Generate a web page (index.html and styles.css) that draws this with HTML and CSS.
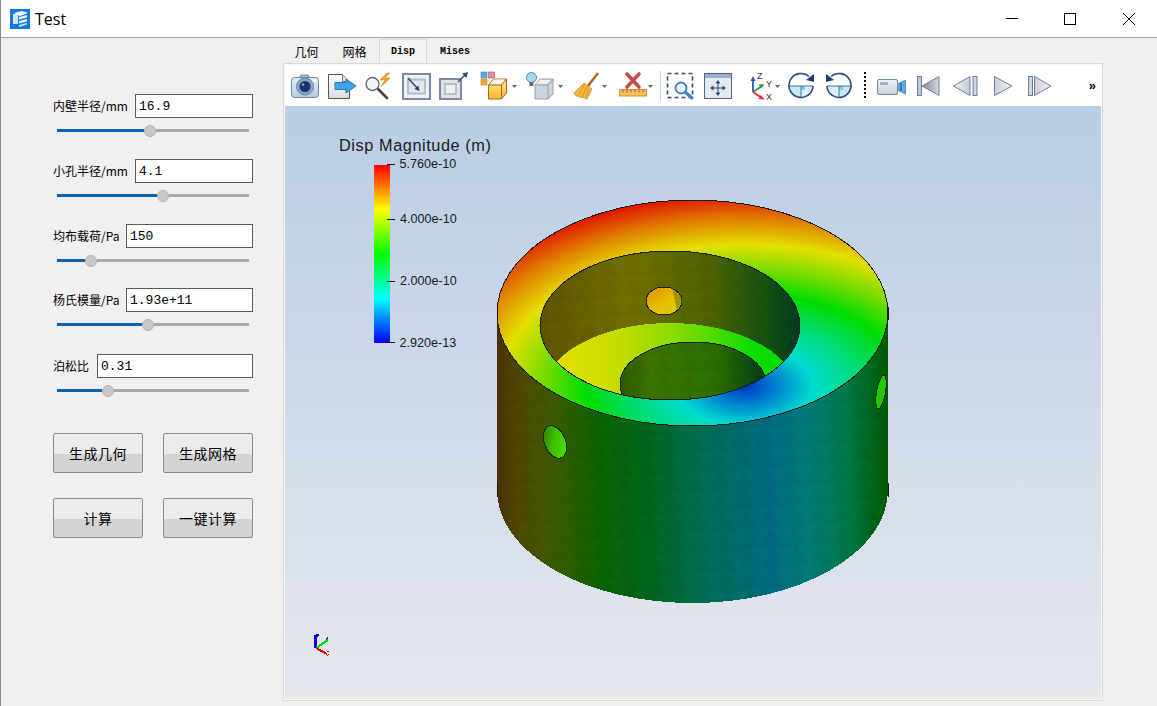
FILE: index.html
```html
<!DOCTYPE html>
<html lang="zh">
<head>
<meta charset="utf-8">
<title>Test</title>
<link rel="stylesheet" href="styles.css">
</head>
<body>
<div class="window">
  <header class="titlebar">
    <svg class="logo" viewBox="0 0 20 20">
      <rect width="20" height="20" fill="#1677e0"/>
      <path d="M3 5h5v10H3z" fill="#cfe4fb"/>
      <path d="M4 4l8-2 6 2-8 3z" fill="#fff"/>
      <path d="M9 8l8-2v2.5l-8 2z" fill="#e6f1fd"/>
      <path d="M9 12l8-2v2.5l-8 2z" fill="#e6f1fd"/>
      <path d="M9 16l8-2v1.500l-8 2.500z" fill="#cfe4fb"/>
    </svg>
    <span class="title">Test</span>
    <div class="caption">
      <svg class="cap" viewBox="0 0 12 12"><path d="M0 5.500h12" stroke="#000" fill="none"/></svg>
      <svg class="cap" viewBox="0 0 12 12"><rect x=".5" y=".5" width="11" height="11" stroke="#000" fill="none"/></svg>
      <svg class="cap cap-close" viewBox="0 0 12 12"><path d="M0 0l12 12M12 0L0 12" stroke="#000" fill="none"/></svg>
    </div>
  </header>
  <div class="main">
    <aside class="sidebar">
      <div class="param">
        <div class="row"><label class="lbl">内壁半径/mm</label><input class="field field-m" value="16.9"></div>
        <div class="slider"><span class="fill" style="width:87px"></span><span class="thumb"></span><span class="rest"></span></div>
      </div>
      <div class="param">
        <div class="row"><label class="lbl">小孔半径/mm</label><input class="field field-m" value="4.1"></div>
        <div class="slider"><span class="fill" style="width:100px"></span><span class="thumb"></span><span class="rest"></span></div>
      </div>
      <div class="param">
        <div class="row"><label class="lbl">均布载荷/Pa</label><input class="field field-l" value="150"></div>
        <div class="slider"><span class="fill" style="width:28px"></span><span class="thumb"></span><span class="rest"></span></div>
      </div>
      <div class="param param-up">
        <div class="row"><label class="lbl">杨氏模量/Pa</label><input class="field field-l" value="1.93e+11"></div>
        <div class="slider"><span class="fill" style="width:85px"></span><span class="thumb"></span><span class="rest"></span></div>
      </div>
      <div class="param">
        <div class="row"><label class="lbl">泊松比</label><input class="field field-xl" value="0.31"></div>
        <div class="slider"><span class="fill" style="width:45px"></span><span class="thumb"></span><span class="rest"></span></div>
      </div>
      <div class="actions">
        <button class="btn">生成几何</button>
        <button class="btn">生成网格</button>
        <button class="btn">计算</button>
        <button class="btn">一键计算</button>
      </div>
    </aside>
    <section class="workspace">
      <nav class="tabs">
        <span class="tab tab-a">几何</span>
        <span class="tab tab-b">网格</span>
        <span class="tab tab-mono tab-active">Disp</span>
        <span class="tab tab-mono tab-c">Mises</span>
      </nav>
      <div class="pane">
        <div class="toolbar">
          <div class="group">
            <svg class="ic" viewBox="0 0 30 30">
              <path d="M9 7l2-3h7l2 3z" fill="#a8bcd8" stroke="#7088a8"/>
              <rect x="1.500" y="6.500" width="27" height="20" rx="3" fill="url(#gBlue)" stroke="#6f86a8"/>
              <circle cx="15" cy="15.500" r="8.500" fill="#8aa4c8" stroke="#6f86a8"/>
              <circle cx="15" cy="15.500" r="5.500" fill="#16356e"/>
              <circle cx="13" cy="13.500" r="1.300" fill="#7ea0d0"/>
              <rect x="23" y="9" width="3" height="2" fill="#fff"/>
            </svg>
            <svg class="ic" viewBox="0 0 30 30">
              <path d="M1.500 3.500h14l7 7v17h-21z" fill="url(#gPage)" stroke="#555"/>
              <path d="M15.500 3.500v7h7" fill="#e8e8e8" stroke="#777"/>
              <path d="M8 11.500h11V8l10 7-10 7v-3.500H8z" fill="#3fa4e6" stroke="#2a78c0"/>
            </svg>
            <svg class="ic" viewBox="0 0 30 30">
              <path d="M14 18l9 9" stroke="#444" stroke-width="2.600" stroke-linecap="round"/>
              <circle cx="8.500" cy="13" r="6.500" fill="#f4f6f8" stroke="#6a6a6a" stroke-width="1.400"/>
              <path d="M23 2l-7 7h5l-4 7 9-9h-5l5-5z" fill="#f2a22c" stroke="#d88410" stroke-width=".6"/>
            </svg>
            <svg class="ic" viewBox="0 0 30 30">
              <rect x="2" y="3" width="27" height="25" fill="#eef0f4" stroke="#7a8aa8" stroke-width="2"/>
              <rect x="7" y="8.500" width="17" height="14" fill="#e2e6ea" stroke="#b4bec8" stroke-width="2"/>
              <path d="M7 7l10 11" stroke="#20406e" stroke-width="1.300"/>
              <path d="M18.500 20l-1-5.500-4 3.500z" fill="#20406e"/>
            </svg>
            <svg class="ic" viewBox="0 0 30 30">
              <rect x="2" y="8" width="21" height="20" fill="#dfe2e8" stroke="#7c8aa4" stroke-width="2"/>
              <rect x="7" y="13" width="11" height="10" fill="#eef0f2" stroke="#a8b4c0" stroke-width="1.500"/>
              <path d="M20 11l7-7" stroke="#30507c" stroke-width="1.500"/>
              <path d="M30 1l-1.500 6-4.500-4.500z" fill="#30507c"/>
            </svg>
          </div>
          <div class="group group-rep">
            <svg class="ic-w" viewBox="0 0 38 30">
              <rect x="1" y="1" width="6" height="6" fill="#5aa8e0" stroke="#3a80b8" stroke-width=".6"/>
              <rect x="8.500" y="1" width="6" height="6" fill="#e88890" stroke="#b05860" stroke-width=".6"/>
              <rect x="1" y="8" width="6" height="6" fill="#f0a838" stroke="#c08020" stroke-width=".6"/>
              <path d="M8.500 14l5-6h13v14l-5 6h-13z" fill="url(#gOrange)" stroke="#a86818"/>
              <path d="M9.500 13.500l4.500-5h11l-4 5z" fill="#f4f4f0"/>
              <path d="M8.500 14h13l5-6M21.500 14v14" fill="none" stroke="#a86818"/>
              <polygon points="32,14 37,14 34.500,17" fill="#666"/>
            </svg>
            <svg class="ic-w" viewBox="0 0 38 30">
              <path d="M10 14l5-6h13v15l-5 5H10z" fill="#cdd3da" stroke="#98a2ae"/>
              <path d="M11 13l4-4h11l-4 4z" fill="#f0f2f4"/>
              <path d="M10 14h13l5-6M23 14v14" fill="none" stroke="#98a2ae"/>
              <circle cx="6.500" cy="6.500" r="5" fill="#a8d8f4" stroke="#4a88b8"/>
              <rect x="4.500" y="11" width="4" height="4" fill="#666"/>
              <polygon points="33,14 38,14 35.500,17" fill="#666"/>
            </svg>
          </div>
          <div class="group group-clean">
            <svg class="ic-w" viewBox="0 0 38 30">
              <path d="M25 2L15 15" stroke="#b06a20" stroke-width="2.600"/>
              <path d="M11 12l8 6-5 10-5-2-1 1-3-2-2 0-2-3z" fill="#f4b840" stroke="#c88a20" stroke-width=".8"/>
              <path d="M11 14l-5 9M14 16l-5 10M16 18l-3 8" stroke="#c88a20" stroke-width=".8"/>
              <polygon points="29,14 34,14 31.500,17" fill="#666"/>
            </svg>
            <svg class="ic-w" viewBox="0 0 38 30">
              <path d="M9 3l12 13M21 3L9 16" stroke="#c94a4a" stroke-width="3.600" stroke-linecap="round"/>
              <rect x="1.500" y="18.500" width="27" height="6.500" fill="#f4c060" stroke="#d89030"/>
              <path d="M5 18.500v3M9 18.500v3M13 18.500v3M17 18.500v3M21 18.500v3M25 18.500v3" stroke="#a86818"/>
              <polygon points="30,14 35,14 32.500,17" fill="#666"/>
            </svg>
          </div>
          <span class="sep"></span>
          <div class="group group-view">
            <svg class="ic" viewBox="0 0 30 30">
              <rect x="1.500" y="2.500" width="25" height="24" fill="none" stroke="#2c4a7c" stroke-width="1.600" stroke-dasharray="4 3"/>
              <path d="M18 20l8 7" stroke="#3a80c8" stroke-width="3" stroke-linecap="round"/>
              <circle cx="15" cy="17" r="5.500" fill="#eef6fc" stroke="#3a80c8" stroke-width="1.800"/>
            </svg>
            <svg class="ic" viewBox="0 0 30 30">
              <rect x="1.500" y="2.500" width="27" height="25" fill="#e6eaf0" stroke="#4a6690"/>
              <rect x="2" y="3" width="26" height="4" fill="#9aaec8"/>
              <path d="M15 10v14M8 17h14" stroke="#2c4a7c"/>
              <path d="M15 9l-2.500 3.500h5zM15 25l-2.500-3.500h5zM7 17l3.500-2.500v5zM23 17l-3.500-2.500v5z" fill="#2c4a7c"/>
            </svg>
          </div>
          <div class="group group-axes">
            <svg class="ic-w" viewBox="0 0 38 30">
              <path d="M4 21V9" stroke="#2a5aa8" stroke-width="1.800"/>
              <polygon points="4,5 1.500,10 6.500,10" fill="#2a5aa8"/>
              <path d="M4 21l9-6" stroke="#2a9a48" stroke-width="1.800"/>
              <polygon points="15.500,13 9.500,13.500 12,17.500" fill="#2a9a48"/>
              <path d="M4 21l9 6" stroke="#d83030" stroke-width="1.800"/>
              <polygon points="15.500,28.500 9.500,28 12,24" fill="#d83030"/>
              <text class="axis-l" x="8" y="8">Z</text>
              <text class="axis-l" x="17" y="16">Y</text>
              <text class="axis-l" x="17" y="29">X</text>
              <polygon points="26,14 31,14 28.500,17" fill="#666"/>
            </svg>
          </div>
          <div class="group">
            <svg class="ic" viewBox="0 0 30 30">
              <path d="M2 15a12 12 0 0 0 24 0z" fill="#c8e6f6"/>
              <path d="M14 15h12a12 12 0 0 1-12 12z" fill="#e0f0fa"/>
              <rect x="14" y="15" width="4" height="4" fill="#8cc4e4"/>
              <path d="M2 15h24M14 15v12" stroke="#3a78a8"/>
              <path d="M22 5.500A12 12 0 1 0 26 15" fill="none" stroke="#2c4a7c" stroke-width="1.600"/>
              <polygon points="27,3 27,11 19,9" fill="#1e3e70"/>
            </svg>
            <svg class="ic" viewBox="0 0 30 30">
              <path d="M3 15a12 12 0 0 0 24 0z" fill="#e0f0fa"/>
              <path d="M15 15h12a12 12 0 0 1-12 12z" fill="#c8e6f6"/>
              <rect x="15" y="15" width="4" height="4" fill="#8cc4e4"/>
              <path d="M3 15h24M15 15v12" stroke="#3a78a8"/>
              <path d="M7 5.500A12 12 0 1 1 3 15" fill="none" stroke="#2c4a7c" stroke-width="1.600"/>
              <polygon points="2,3 2,11 10,9" fill="#1e3e70"/>
            </svg>
          </div>
          <span class="dots"></span>
          <div class="group group-anim">
            <svg class="ic" viewBox="0 0 30 30">
              <rect x="1.500" y="8.500" width="20" height="15" rx="1.500" fill="url(#gGrey)" stroke="#7488a4"/>
              <rect x="4" y="11" width="8" height="3" fill="#aab4c0"/>
              <path d="M21.500 13l8-4v14l-8-4z" fill="#58b0e4" stroke="#7488a4"/>
              <rect x="24" y="12" width="2" height="8" fill="#1f80c8"/>
            </svg>
            <svg class="ic" viewBox="0 0 30 30">
              <rect x="4.500" y="5.500" width="4" height="19" fill="#c0c8d4" stroke="#6e7e9e"/>
              <path d="M26 5.500v19L9 15z" fill="url(#gDark)" stroke="#6e7e9e"/>
            </svg>
            <svg class="ic" viewBox="0 0 30 30">
              <path d="M20 5.500v19L3.500 15z" fill="url(#gLight)" stroke="#6e7e9e"/>
              <rect x="23" y="5.500" width="4" height="19" fill="#d0d6e0" stroke="#6e7e9e"/>
            </svg>
            <svg class="ic" viewBox="0 0 30 30">
              <path d="M7.500 5.500v19L25 15z" fill="url(#gLightR)" stroke="#6e7e9e"/>
            </svg>
            <svg class="ic" viewBox="0 0 30 30">
              <rect x="4.500" y="5.500" width="4" height="19" fill="#d0d6e0" stroke="#6e7e9e"/>
              <path d="M10.500 5.500v19L27 15z" fill="url(#gLightR)" stroke="#6e7e9e"/>
            </svg>
          </div>
          <span class="more">»</span>
        </div>
        <div class="viewport">
          <svg class="scene" viewBox="285 106 816 593">
            <defs>
              <linearGradient id="gBlue" x1="0" y1="0" x2="0" y2="1"><stop offset="0" stop-color="#e6eef8"/><stop offset="1" stop-color="#b8c8e0"/></linearGradient>
              <linearGradient id="gPage" x1="0" y1="0" x2="0" y2="1"><stop offset="0" stop-color="#fff"/><stop offset="1" stop-color="#d8dce2"/></linearGradient>
              <linearGradient id="gOrange" x1="0" y1="0" x2="0" y2="1"><stop offset="0" stop-color="#ffe890"/><stop offset="1" stop-color="#f8b830"/></linearGradient>
              <linearGradient id="gGrey" x1="0" y1="0" x2="0" y2="1"><stop offset="0" stop-color="#f0f2f4"/><stop offset="1" stop-color="#ccd2da"/></linearGradient>
              <linearGradient id="gDark" x1="0" y1="0" x2="1" y2="0"><stop offset="0" stop-color="#7c8898"/><stop offset="1" stop-color="#d4dae2"/></linearGradient>
              <linearGradient id="gLight" x1="0" y1="0" x2="1" y2="0"><stop offset="0" stop-color="#f0f2f6"/><stop offset="1" stop-color="#c4ccd8"/></linearGradient>
              <linearGradient id="gLightR" x1="0" y1="0" x2="1" y2="0"><stop offset="0" stop-color="#c8d0dc"/><stop offset="1" stop-color="#f0f2f6"/></linearGradient>
              <linearGradient id="sky" x1="0" y1="0" x2="0" y2="1"><stop offset="0" stop-color="#b9cde5"/><stop offset="1" stop-color="#e6e8ee"/></linearGradient>
              <linearGradient id="bar" x1="0" y1="0" x2="0" y2="1">
                <stop offset="0" stop-color="#ff0000"/><stop offset=".25" stop-color="#ffff00"/><stop offset=".5" stop-color="#00ff00"/><stop offset=".75" stop-color="#00ffff"/><stop offset="1" stop-color="#0000ff"/>
              </linearGradient>
              <linearGradient id="wall" gradientUnits="userSpaceOnUse" x1="497" y1="0" x2="888" y2="0">
                <stop offset="0" stop-color="#4c3206"/><stop offset=".06" stop-color="#4f4a02"/><stop offset=".14" stop-color="#3f5a00"/><stop offset=".26" stop-color="#0c6400"/>
                <stop offset=".38" stop-color="#00661c"/><stop offset=".52" stop-color="#006e52"/><stop offset=".7" stop-color="#006c82"/>
                <stop offset=".8" stop-color="#007c78"/><stop offset=".9" stop-color="#007844"/><stop offset="1" stop-color="#005a00"/>
              </linearGradient>
              <radialGradient id="top" gradientUnits="userSpaceOnUse" cx="745" cy="0" r="340" gradientTransform="translate(0 386) scale(1 .578)">
                <stop offset="0" stop-color="#0034c4"/><stop offset=".1" stop-color="#0088d0"/><stop offset=".2" stop-color="#00dcd0"/><stop offset=".34" stop-color="#00dc70"/>
                <stop offset=".47" stop-color="#00dc00"/><stop offset=".6" stop-color="#80dc00"/><stop offset=".72" stop-color="#e4e000"/><stop offset=".85" stop-color="#e08000"/><stop offset="1" stop-color="#e00000"/>
              </radialGradient>
              <linearGradient id="inner" gradientUnits="userSpaceOnUse" x1="540" y1="0" x2="800" y2="0">
                <stop offset="0" stop-color="#5e5400"/><stop offset=".35" stop-color="#727000"/><stop offset=".65" stop-color="#4e6400"/><stop offset=".87" stop-color="#145210"/><stop offset="1" stop-color="#003a20"/>
              </linearGradient>
              <linearGradient id="floor" gradientUnits="userSpaceOnUse" x1="556" y1="0" x2="785" y2="0">
                <stop offset="0" stop-color="#e4e000"/><stop offset=".3" stop-color="#c0dc00"/><stop offset=".55" stop-color="#80dc00"/><stop offset=".85" stop-color="#10dc00"/><stop offset="1" stop-color="#00dc00"/>
              </linearGradient>
              <linearGradient id="deep" gradientUnits="userSpaceOnUse" x1="620" y1="0" x2="766" y2="0">
                <stop offset="0" stop-color="#2e5a00"/><stop offset=".2" stop-color="#3c7400"/><stop offset=".65" stop-color="#2c7000"/><stop offset="1" stop-color="#003c18"/>
              </linearGradient>
              <linearGradient id="backhole" x1="0" y1="0" x2="1" y2="1">
                <stop offset="0" stop-color="#e08a00"/><stop offset=".55" stop-color="#e8c000"/><stop offset="1" stop-color="#d0d000"/>
              </linearGradient>
              <linearGradient id="lefthole" x1="0" y1="0" x2="1" y2="1">
                <stop offset="0" stop-color="#2a6a00"/><stop offset=".45" stop-color="#3cc000"/><stop offset="1" stop-color="#48e800"/>
              </linearGradient>
              <pattern id="facets" patternUnits="userSpaceOnUse" width="24" height="20" patternTransform="rotate(-4)">
                <polygon points="0,20 12,0 24,20" fill="#000" fill-opacity=".035"/>
              </pattern>
              <clipPath id="holeClip"><ellipse cx="670" cy="325.500" rx="130" ry="74.500"/></clipPath>
            </defs>

            <rect x="285" y="106" width="816" height="593" fill="url(#sky)"/>

            <text class="bar-title" x="339" y="150.500">Disp Magnitude (m)</text>
            <rect x="374" y="165" width="16" height="178" fill="url(#bar)"/>
            <path d="M387 164.500h8M387 219.500h8M387 281.500h8M387 342.500h8" stroke="#111" fill="none"/>
            <text class="bar-label" x="399.500" y="168">5.760e-10</text>
            <text class="bar-label" x="400" y="223">4.000e-10</text>
            <text class="bar-label" x="400" y="285">2.000e-10</text>
            <text class="bar-label" x="399.500" y="346.500">2.920e-13</text>

            <g class="crisp">
              <path d="M497 313V490A195.500 113 0 0 0 888 490V313z" fill="url(#wall)"/>
              <path d="M497 313V490A195.500 113 0 0 0 888 490V313z" fill="url(#facets)"/>
              <path d="M497.500 483v14M888.500 483v14M497.500 307v13M888.500 307v13" stroke="#1a1a1a" fill="none"/>

              <ellipse cx="692.500" cy="313" rx="195.500" ry="113" fill="url(#top)" stroke="#1a1a1a"/>

              <ellipse cx="670" cy="325.500" rx="130" ry="74.500" fill="url(#inner)"/>
              <ellipse cx="670" cy="325.500" rx="130" ry="74.500" fill="url(#facets)"/>
              <g clip-path="url(#holeClip)">
                <ellipse cx="670" cy="398" rx="130" ry="75" fill="url(#floor)"/>
                <ellipse cx="693" cy="384" rx="73" ry="42" fill="url(#deep)"/>
                <ellipse cx="693" cy="384" rx="73" ry="42" fill="url(#facets)"/>
                <ellipse cx="693" cy="384" rx="73" ry="42" fill="none" stroke="#1a1a1a"/>
              </g>
              <ellipse cx="670" cy="325.500" rx="130" ry="74.500" fill="none" stroke="#1a1a1a"/>

              <ellipse cx="664" cy="301" rx="18" ry="14" fill="url(#backhole)" stroke="#1a1a1a"/>
              <path d="M672 288l9 8 1 6-5 8z" fill="#6a7000" fill-opacity=".55"/>

              <ellipse cx="555" cy="442" rx="10.500" ry="17" transform="rotate(-22 555 442)" fill="url(#lefthole)" stroke="#1a2a10"/>
              <ellipse cx="881" cy="392" rx="4.500" ry="17" transform="rotate(10 881 392)" fill="#20c800" stroke="#103010"/>
            </g>

            <g class="crisp" fill="none">
              <path d="M315.500 648V635" stroke="#0000e8" stroke-width="3"/>
              <path d="M316 635v-1h3l-2 3" stroke="#0000e8"/>
              <path d="M316 648l12-8" stroke="#00d800" stroke-width="2"/>
              <path d="M316 648l11 6" stroke="#e80000" stroke-width="2"/>
              <path d="M327 652l2-1M327 656l2-2" stroke="#e80000"/>
              <path d="M326 639l2-1" stroke="#006000" stroke-width="2"/>
            </g>
          </svg>
        </div>
      </div>
    </section>
  </div>
</div>
</body>
</html>
```

FILE: styles.css
```css
* { box-sizing: border-box; }

html, body {
  margin: 0;
  padding: 0;
  height: 100%;
  overflow: hidden;
}

body {
  background: #f0f0f0;
  font-family: "Noto Sans CJK SC", "Liberation Sans", sans-serif;
  color: #000;
}

.window {
  width: 1157px;
  height: 706px;
  display: flex;
  flex-direction: column;
  border-left: 1px solid #8c8c8c;
}

/* title bar */
.titlebar {
  flex: 0 0 38px;
  display: flex;
  align-items: center;
  background: #fff;
  border-bottom: 1px solid #a0a0a0;
  padding-left: 9px;
}

.logo {
  width: 20px;
  height: 20px;
}

.title {
  margin-left: 5px;
  font-family: "Open Sans", "Liberation Sans", sans-serif;
  font-size: 16px;
  line-height: 20px;
}

.caption {
  margin-left: auto;
  display: flex;
  align-items: center;
  gap: 46px;
  padding-right: 22px;
}

.cap {
  width: 12px;
  height: 12px;
  display: block;
}

.cap-close {
  margin-left: 1px;
}

/* main layout */
.main {
  flex: 1;
  display: flex;
  min-height: 0;
}

.sidebar {
  flex: 0 0 282px;
  padding: 56px 0 0 52px;
  display: flex;
  flex-direction: column;
  gap: 22px;
}

.param {
  width: 200px;
}

.param-up {
  margin-top: -1px;
  margin-bottom: 1px;
}

.row {
  display: flex;
  align-items: center;
  justify-content: space-between;
  height: 24px;
}

.lbl {
  font-size: 12px;
  line-height: 16px;
  white-space: nowrap;
}

.field {
  height: 24px;
  padding: 0 0 0 3px;
  border: 1px solid #5a5a5a;
  border-radius: 0;
  background: #fff;
  color: #000;
  font-family: "Liberation Mono", monospace;
  font-size: 13px;
  outline: none;
}

.field-m { width: 118px; }
.field-l { width: 127px; }
.field-xl { width: 156px; }

.slider {
  margin: 6px 0 0 4px;
  width: 192px;
  height: 13px;
  display: flex;
  align-items: center;
}

.fill {
  height: 3px;
  background: #0a64b4;
}

.rest {
  flex: 1;
  height: 3px;
  background: #a8a8a8;
}

.thumb {
  flex: 0 0 12px;
  height: 12px;
  border-radius: 50%;
  background: #c8c8c8;
  border: 1px solid #b0b0b0;
}

.actions {
  margin-top: 14px;
  width: 200px;
  display: grid;
  grid-template-columns: 90px 90px;
  grid-auto-rows: 40px;
  column-gap: 20px;
  row-gap: 25px;
}

.btn {
  padding: 0;
  border: 1px solid #8a8a8a;
  border-radius: 2px;
  background: linear-gradient(#ececec 0, #ececec 52%, #d4d4d4 52%, #d4d4d4 100%);
  color: #000;
  font-family: "Noto Sans CJK SC", sans-serif;
  font-size: 14px;
  letter-spacing: .5px;
}

/* tabs */
.workspace {
  flex: 0 0 820px;
  display: flex;
  flex-direction: column;
  padding-top: 1px;
}

.tabs {
  flex: 0 0 24px;
  display: flex;
}

.tab {
  display: flex;
  align-items: center;
  justify-content: center;
  font-size: 12px;
  width: 48px;
}

.tab-a { width: 47px; }
.tab-b { width: 49px; }
.tab-c { width: 56px; }

.tab-mono {
  font-family: "Liberation Mono", monospace;
  font-size: 10px;
  font-weight: 700;
}

.tab-active {
  background: #f4f4f4;
  border: 1px solid #d9d9d9;
  border-bottom: none;
}

.pane {
  flex: 0 0 638px;
  display: flex;
  flex-direction: column;
  border: 1px solid #d8d8d8;
  padding: 1px;
  background: #f6f6f6;
}

/* toolbar */
.toolbar {
  flex: 0 0 41px;
  display: flex;
  align-items: center;
  background: #fff;
  padding-left: 5px;
}

.group {
  display: flex;
  align-items: center;
  gap: 7px;
}

.group-rep { margin-left: 12px; }
.group-clean { margin-left: 10px; }
.group-view { margin-left: 5px; }
.group-axes { margin-left: 16px; }
.group-anim { margin-left: 10px; }

.ic {
  width: 30px;
  height: 30px;
  display: block;
}

.ic-w {
  width: 38px;
  height: 30px;
  display: block;
}

.sep {
  width: 1px;
  height: 30px;
  margin-left: 4px;
  background: #cfcfcf;
}

.dots {
  width: 2px;
  height: 27px;
  margin-left: 10px;
  background: repeating-linear-gradient(#000 0, #000 2px, transparent 2px, transparent 4px);
}

.more {
  margin-left: auto;
  padding-right: 5px;
  font-family: "Liberation Sans", sans-serif;
  font-size: 13px;
  font-weight: 700;
}

.axis-l {
  font-family: "Liberation Sans", sans-serif;
  font-size: 9px;
  fill: #333;
}

/* 3D view */
.viewport {
  flex: 0 0 593px;
}

.scene {
  display: block;
  width: 816px;
  height: 593px;
}

.crisp {
  shape-rendering: crispEdges;
}

.bar-title {
  font-family: "Liberation Sans", sans-serif;
  font-size: 16.300px;
  letter-spacing: .58px;
  fill: #1a1a1a;
}

.bar-label {
  font-family: "Liberation Sans", sans-serif;
  font-size: 12.600px;
  fill: #1a1a1a;
}
```
